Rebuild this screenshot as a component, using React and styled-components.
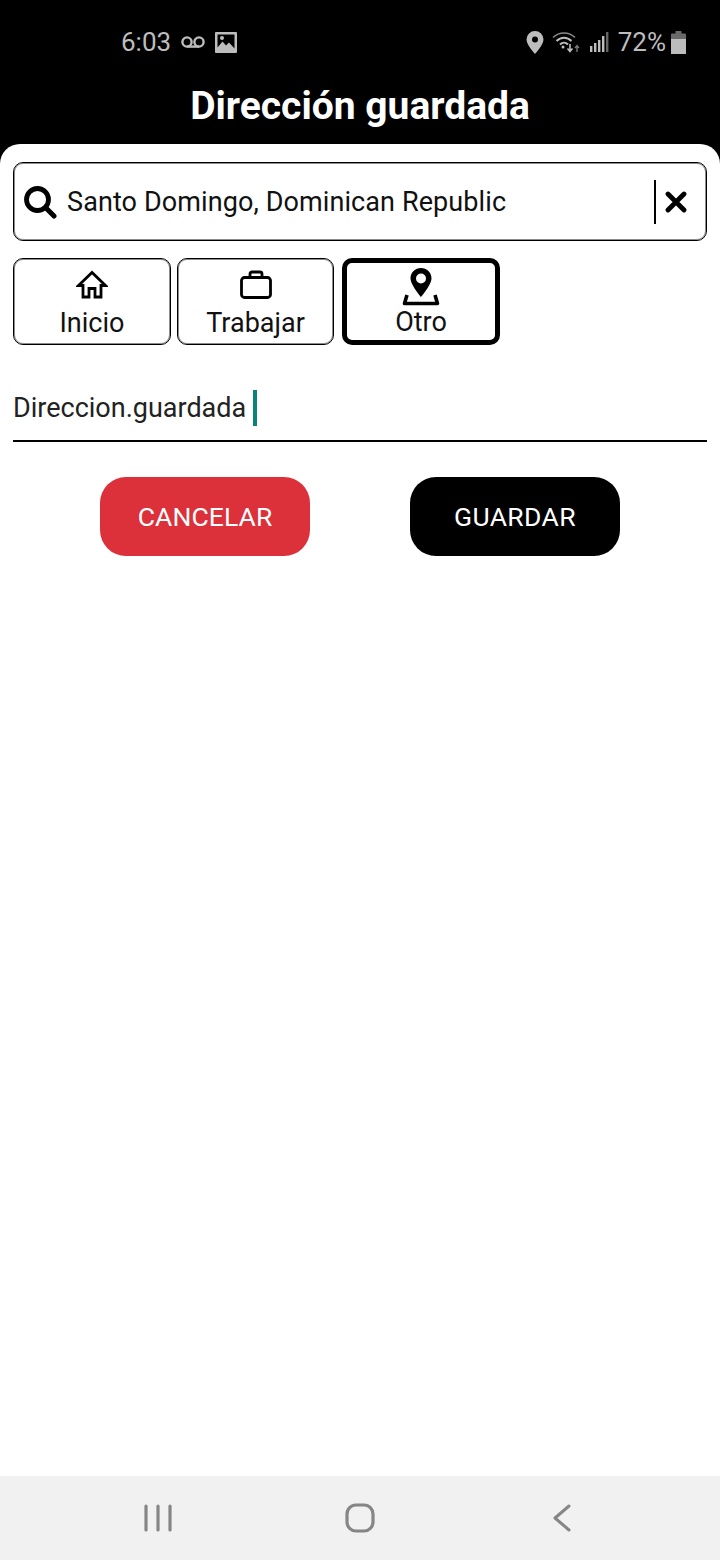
import React from "react";
import styled, { createGlobalStyle } from "styled-components";

const Global = createGlobalStyle`
  html, body { margin: 0; padding: 0; background: #000; }
  * { box-sizing: border-box; }
  body { font-family: Roboto, "Liberation Sans", sans-serif; }
`;
const Page = styled.div`
  width: 720px; height: 1560px; display: flex; flex-direction: column; background: #000; overflow: hidden;
`;
const StatusBar = styled.div`
  height: 62px; flex: none; display: flex; align-items: center; justify-content: space-between;
  padding: 22px 34px 0 121px; color: #bdbdbd; font-size: 26px;
`;
const StatusGroup = styled.div`
  display: flex; align-items: center; gap: ${p => p.$gap || 0}px;
`;
const PinSlot = styled.span`
  display: flex; margin-right: -2px;
`;
const PercentText = styled.span`
  margin-left: -1px;
`;
const BatterySlot = styled.span`
  display: flex; margin-left: -5px;
`;
const Title = styled.h1`
  height: 82px; flex: none; margin: 0; display: flex; align-items: center; justify-content: center;
  color: #fff; font-size: 39px; font-weight: 700; padding-top: 6px;
`;
const Sheet = styled.main`
  flex: 1; background: #fff; border-radius: 20px 20px 0 0; padding: 18px 13px 0;
  display: flex; flex-direction: column;
`;
const SearchBox = styled.div`
  height: 79px; border: 1px solid #000; box-shadow: inset 0 0 0 1px rgba(0, 0, 0, 0.45);
  border-radius: 10px; display: flex; align-items: center;
  padding: 0 0 0 9px; color: #111; font-size: 27px;
`;
const SearchText = styled.span`
  flex: 1; margin-left: 10px; letter-spacing: 0.1px;
`;
const Divider = styled.span`
  width: 2px; height: 44px; background: #000; margin-left: 1px; margin-right: 9px;
`;
const ClearSlot = styled.span`
  width: 41px; display: flex;
`;
const Tabs = styled.div`
  display: flex; gap: 6px; margin-top: 17px;
`;
const Tab = styled.div`
  width: ${p => p.$w}px; height: 87px;
  border: ${p => (p.$active ? "5px" : "1px")} solid #000;
  box-shadow: ${p => (p.$active ? "none" : "inset 0 0 0 1px rgba(0, 0, 0, 0.45)")};
  border-radius: 10px; display: flex; flex-direction: column; align-items: center;
  padding-top: ${p => (p.$active ? "5px" : "11px")};
  gap: ${p => (p.$active ? "1px" : "8px")};
  font-size: 27px; line-height: 30px; color: #111;
  margin-left: ${p => p.$ml || 0}px;
`;
const InputRow = styled.div`
  height: 97px; flex: none; border-bottom: 2px solid #000; display: flex; align-items: center;
  padding-top: 30px; font-size: 27px; color: #222;
`;
const Caret = styled.span`
  width: 4px; height: 36px; background: #0b8478; margin-left: 7px;
`;
const Actions = styled.div`
  display: flex; justify-content: center; gap: 100px; margin-top: 35px;
`;
const ActionButton = styled.button`
  width: 210px; height: 79px; border: 0; border-radius: 26px; color: #fff; font: 400 26.5px Roboto, sans-serif;
  letter-spacing: ${p => (p.$danger ? "0.1px" : "0.4px")};
  background: ${p => (p.$danger ? "#dc303a" : "#000")};
  display: flex; align-items: center; justify-content: center; padding: 0;
`;
const NavBar = styled.nav`
  height: 84px; flex: none; background: #f1f1f1; display: flex; align-items: center;
  padding: 0 0 0 144px;
`;
const NavSlot = styled.span`
  display: flex; margin-left: ${p => p.$ml || 0}px; margin-top: -1px;
`;

const Voicemail = () => (
  <svg width="24" height="14" viewBox="0 0 24 14" fill="none" stroke="#bdbdbd" strokeWidth="2.4">
    <circle cx="6" cy="7" r="4.6" /><circle cx="18" cy="7" r="4.6" /><path d="M6 11.6h12" />
  </svg>
);
const Picture = () => (
  <svg width="22" height="21" viewBox="0 0 22 21">
    <path fill="#bdbdbd" fillRule="evenodd" d="M1 0h20a1 1 0 0 1 1 1v19a1 1 0 0 1-1 1H1a1 1 0 0 1-1-1V1a1 1 0 0 1 1-1zm1.500 2.500v13l5-6 3.500 4 3-3 5.500 6V2.500z" />
    <circle cx="7" cy="6" r="2" fill="#bdbdbd" />
  </svg>
);
const StatusPin = () => (
  <svg width="18" height="23" viewBox="0 0 18 23">
    <path fill="#bdbdbd" fillRule="evenodd" d="M9 0a8.500 8.500 0 0 1 8.500 8.500C17.500 14 9 23 9 23S.5 14 .5 8.500A8.500 8.500 0 0 1 9 0zm0 5.500a3 3 0 1 0 0 6 3 3 0 0 0 0-6z" />
  </svg>
);
const Wifi = () => (
  <svg width="28" height="22" viewBox="0 0 28 22" fill="none" stroke="#bdbdbd">
    <path strokeWidth="1.400" stroke="#8a8a8a" d="M1 6.500C7 .5 17 .5 23 6.500" />
    <path strokeWidth="2" d="M4.500 10c4.500-4.500 10.500-4.500 15 0" />
    <path strokeWidth="2" d="M8 13.500c2.500-2.500 5.500-2.500 8 0" />
    <circle cx="11" cy="16" r="1.500" fill="#bdbdbd" stroke="none" />
    <path strokeWidth="1.600" d="M18 13v7m-2.500-2.500L18 20.500l2.500-3" />
    <path strokeWidth="1.400" stroke="#777" d="M25 21v-6m-2 2 2-2.500 2 2.500" />
  </svg>
);
const Signal = () => (
  <svg width="19" height="20" viewBox="0 0 19 20" fill="#bdbdbd">
    <rect x="0" y="14" width="2.400" height="6" /><rect x="4" y="11" width="2.400" height="9" />
    <rect x="8" y="8" width="2.400" height="12" /><rect x="12" y="4" width="2.400" height="16" />
    <rect x="16" y="0" width="2.400" height="20" fill="#666" />
  </svg>
);
const Battery = () => (
  <svg width="15" height="23" viewBox="0 0 15 23">
    <path fill="#6a6a6a" d="M4.500 0h6v2.500H14a1 1 0 0 1 1 1V8H0V3.500a1 1 0 0 1 1-1h3.500z" />
    <rect x="0" y="8" width="15" height="15" fill="#bdbdbd" />
  </svg>
);
const SearchIcon = () => (
  <svg width="34" height="34" viewBox="0 0 34 34" fill="none" stroke="#000">
    <circle cx="14.500" cy="14.500" r="11" strokeWidth="4.800" />
    <path d="M23 23l8 8" strokeWidth="5" strokeLinecap="round" />
  </svg>
);
const ClearIcon = () => (
  <svg width="22" height="22" viewBox="0 0 22 22" fill="none" stroke="#000" strokeWidth="4.800" strokeLinecap="round">
    <path d="M3 3l16 16M19 3L3 19" />
  </svg>
);
const HomeIcon = () => (
  <svg width="32" height="30" viewBox="0 0 32 30" fill="none" stroke="#000" strokeWidth="2.800">
    <path d="M16 2.500 2.500 15.500H7V27h6v-8.500h6V27h6V15.500h4.500z" strokeLinejoin="miter" />
  </svg>
);
const CaseIcon = () => (
  <svg width="32" height="30" viewBox="0 0 32 30" fill="none" stroke="#000" strokeWidth="2.800">
    <rect x="1.500" y="7.500" width="29" height="20" rx="3" />
    <path d="M10 7.500V4a2 2 0 0 1 2-2h8a2 2 0 0 1 2 2v3.500" />
  </svg>
);
const PinTrayIcon = () => (
  <svg width="38" height="38" viewBox="0 0 38 38">
    <path fill="#000" fillRule="evenodd" d="M19 0c5.800 0 10.500 4.600 10.500 10.300C29.500 17 19 29 19 29S8.500 17 8.500 10.300C8.500 4.600 13.200 0 19 0zm0 5.500a5 5 0 1 0 0 10 5 5 0 0 0 0-10z" />
    <path fill="none" stroke="#000" strokeWidth="3.600" d="M5 27l-2.500 8.500h33L33 27" strokeLinejoin="round" />
  </svg>
);
const MenuIcon = () => (
  <svg width="28" height="28" viewBox="0 0 28 28" stroke="#868686" strokeWidth="3.200" strokeLinecap="round">
    <path d="M2 2v24M14 2v24M26 2v24" />
  </svg>
);
const HomeNavIcon = () => (
  <svg width="30" height="30" viewBox="0 0 30 30" fill="none" stroke="#868686" strokeWidth="3.200">
    <rect x="2" y="2" width="26" height="26" rx="9" />
  </svg>
);
const BackIcon = () => (
  <svg width="18" height="28" viewBox="0 0 18 28" fill="none" stroke="#868686" strokeWidth="3" strokeLinecap="round" strokeLinejoin="round">
    <path d="M16 2 2 14l14 12" />
  </svg>
);

export default function App() {
  return (
    <Page>
      <Global />
      <StatusBar>
        <StatusGroup $gap={10}>
          <span>6:03</span>
          <Voicemail />
          <Picture />
        </StatusGroup>
        <StatusGroup $gap={10}>
          <PinSlot><StatusPin /></PinSlot>
          <Wifi />
          <Signal />
          <PercentText>72%</PercentText>
          <BatterySlot><Battery /></BatterySlot>
        </StatusGroup>
      </StatusBar>
      <Title>Dirección guardada</Title>
      <Sheet>
        <SearchBox>
          <SearchIcon />
          <SearchText>Santo Domingo, Dominican Republic</SearchText>
          <Divider />
          <ClearSlot><ClearIcon /></ClearSlot>
        </SearchBox>
        <Tabs>
          <Tab $w={158}><HomeIcon />Inicio</Tab>
          <Tab $w={157}><CaseIcon />Trabajar</Tab>
          <Tab $w={158} $active $ml={2}><PinTrayIcon />Otro</Tab>
        </Tabs>
        <InputRow>Direccion.guardada<Caret /></InputRow>
        <Actions>
          <ActionButton $danger>CANCELAR</ActionButton>
          <ActionButton>GUARDAR</ActionButton>
        </Actions>
      </Sheet>
      <NavBar>
        <NavSlot><MenuIcon /></NavSlot>
        <NavSlot $ml={173}><HomeNavIcon /></NavSlot>
        <NavSlot $ml={178}><BackIcon /></NavSlot>
      </NavBar>
    </Page>
  );
}
